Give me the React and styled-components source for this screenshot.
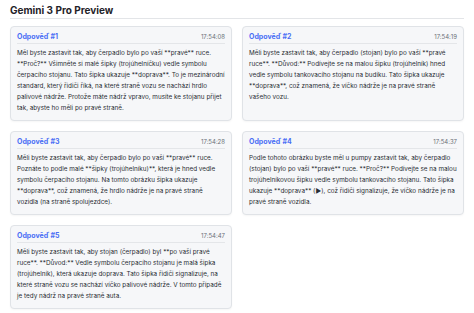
import React from "react";
import styled, { createGlobalStyle } from "styled-components";

const Global = createGlobalStyle`
  html, body { margin: 0; padding: 0; background: #ffffff; }
  body { font-family: Inter, "Noto Sans", "Liberation Sans", sans-serif; color: #2b2f36; }
`;

const Page = styled.div`
  padding: 3px 10px 10px 10px;
`;

const Title = styled.h1`
  margin: 0;
  font-size: 10px;
  line-height: 14px;
  font-weight: 700;
  color: #1f2328;
  padding-bottom: 1px;
  border-bottom: 1px solid #e3e5e8;
`;

const Grid = styled.div`
  margin-top: 7px;
  display: grid;
  grid-template-columns: 1fr 1fr;
  gap: 10px;
`;

const Card = styled.div`
  background: #f6f7f9;
  border: 1px solid #e0e3e7;
  border-radius: 4px;
  padding: 4px 6px 6px 6px;
  box-shadow: 0 1px 2px rgba(0, 0, 0, 0.04);
`;

const Header = styled.div`
  display: flex;
  justify-content: space-between;
  align-items: center;
  padding-bottom: 2px;
  border-bottom: 1px solid #e4e6e9;
  margin-bottom: 4px;
  height: 10px;
`;

const Label = styled.span`
  font-size: 7px;
  font-weight: 700;
  color: #4a6ef5;
`;

const Time = styled.span`
  font-size: 6px;
  color: #6b7078;
`;

const Body = styled.p`
  margin: 0;
  font-size: 6.35px;
  line-height: 11px;
  color: #2a2e34;
`;

const answers = [
  {
    id: 1,
    time: "17:54:08",
    text: "Měl byste zastavit tak, aby čerpadlo bylo po vaší **pravé** ruce. **Proč?** Všimněte si malé šipky (trojúhelníčku) vedle symbolu čerpacího stojanu. Tato šipka ukazuje **doprava**. To je mezinárodní standard, který řidiči říká, na které straně vozu se nachází hrdlo palivové nádrže. Protože máte nádrž vpravo, musíte ke stojanu přijet tak, abyste ho měli po pravé straně.",
  },
  {
    id: 2,
    time: "17:54:19",
    text: "Měli byste zastavit tak, aby čerpadlo (stojan) bylo po vaší **pravé ruce**. **Důvod:** Podívejte se na malou šipku (trojúhelník) hned vedle symbolu tankovacího stojanu na budíku. Tato šipka ukazuje **doprava**, což znamená, že víčko nádrže je na pravé straně vašeho vozu.",
  },
  {
    id: 3,
    time: "17:54:28",
    text: "Měli byste zastavit tak, aby čerpadlo bylo po vaší **pravé** ruce. Poznáte to podle malé **šipky (trojúhelníku)**, která je hned vedle symbolu čerpacího stojanu. Na tomto obrázku šipka ukazuje **doprava**, což znamená, že hrdlo nádrže je na pravé straně vozidla (na straně spolujezdce).",
  },
  {
    id: 4,
    time: "17:54:37",
    text: "Podle tohoto obrázku byste měl u pumpy zastavit tak, aby čerpadlo (stojan) bylo po vaší **pravé** ruce. **Proč?** Podívejte se na malou trojúhelníkovou šipku vedle symbolu tankovacího stojanu. Tato šipka ukazuje **doprava** (▶), což řidiči signalizuje, že víčko nádrže je na pravé straně vozidla.",
  },
  {
    id: 5,
    time: "17:54:47",
    text: "Měli byste zastavit tak, aby stojan (čerpadlo) byl **po vaší pravé ruce**. **Důvod:** Vedle symbolu čerpacího stojanu je malá šipka (trojúhelník), která ukazuje doprava. Tato šipka řidiči signalizuje, na které straně vozu se nachází víčko palivové nádrže. V tomto případě je tedy nádrž na pravé straně auta.",
  },
];

export default function App() {
  return (
    <Page>
      <Global />
      <Title>Gemini 3 Pro Preview</Title>
      <Grid>
        {answers.map((a) => (
          <Card key={a.id}>
            <Header>
              <Label>Odpověď #{a.id}</Label>
              <Time>{a.time}</Time>
            </Header>
            <Body>{a.text}</Body>
          </Card>
        ))}
      </Grid>
    </Page>
  );
}
